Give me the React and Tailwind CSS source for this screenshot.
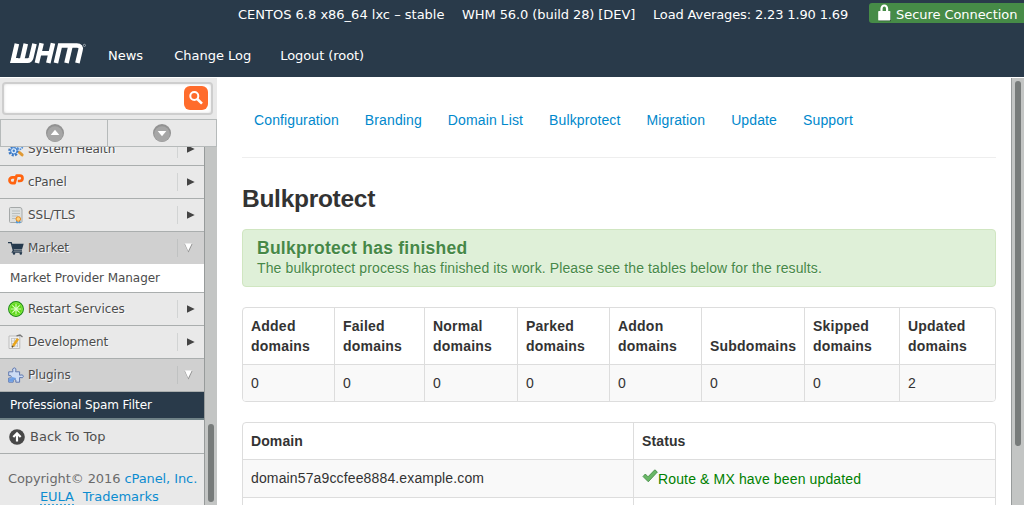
const svgBase = 'shrink-0 block overflow-visible';

function Logo() {
  return (
    <svg className={svgBase} width="78" height="24" viewBox="0 0 78 24" fill="none" stroke="#fff" strokeWidth="4.6" aria-label="WHM">
      <path d="M7.3 .8 L3.4 17.6 H18 Q20.8 17.6 21.6 14.6 L24.9 .8" transform="translate(-.4 0)" />
      <path d="M.4 19.9 L1.6 15 H8 V19.9Z" fill="#fff" stroke="none" />
      <path d="M15.8 .8 L11.9 17.6" />
      <path d="M31.6 .2 L26.9 20 M43 .2 L38.3 20 M29.5 10.2 H41" />
      <path d="M45.9 20 L50 2.5 H66.8 Q71.6 2.5 70.5 7 L67.4 20" />
      <path d="M60.6 2.5 L56.5 20" />
      <circle cx="74.4" cy="2.4" r="1.1" stroke="#9aa4ad" strokeWidth="1" />
    </svg>
  );
}

function Lock() {
  return (
    <svg className={svgBase} width="14" height="18" viewBox="0 0 14 18">
      <path d="M1 8.5H13V17.2H1Z" fill="#25502a" />
      <path d="M3.5 8V4.8a2.8 3.3 0 0 1 5.6 0V8" fill="none" stroke="#fff" strokeWidth="2.2" />
      <rect x="0.2" y="7" width="12.2" height="9.6" rx="0.8" fill="#fff" />
    </svg>
  );
}

function Gear() {
  return (
    <svg className={svgBase} width="16" height="16" viewBox="0 0 16 16">
      <circle cx="5.8" cy="9.8" r="4.3" fill="#bcd8f5" stroke="#3b78c4" strokeWidth="2.6" strokeDasharray="2 1.3" />
      <circle cx="5.8" cy="9.8" r="3.2" fill="#d7e8fa" stroke="#3f7fcc" />
      <circle cx="5.8" cy="9.8" r="1.2" fill="#3f7fcc" />
      <circle cx="12" cy="6" r="2.3" fill="#cfe2f7" stroke="#5a93d6" strokeWidth="1.8" strokeDasharray="1.4 .8" />
      <path d="M11.5 11.5l2.6 2.4" stroke="#e09a35" strokeWidth="3" strokeLinecap="round" />
    </svg>
  );
}

function CpanelIcon() {
  return (
    <svg className={svgBase} width="16" height="16" viewBox="0 0 16 16" fill="none" stroke="#ff6410" strokeWidth="2.7" strokeLinejoin="round">
      <path d="M7 3.4H4.4a2.9 2.9 0 0 0 0 5.8H6.6L8.6 1.6H11.8a2.6 2.6 0 0 1 0 5.4H9.8" />
    </svg>
  );
}

function Certificate() {
  return (
    <svg className={svgBase} width="16" height="16" viewBox="0 0 16 16">
      <path d="M1.5 1.5Q1.5.5 2.5.5H12Q14 .5 14 3V14.5Q14 15.5 13 15.5H2.5Q1.5 15.5 1.5 14.5Z" fill="#dde0e0" stroke="#a5a9a9" />
      <path d="M4 4H12M4 6.5H12M4 9H10M4 11.5H8" stroke="#b9bfbf" />
      <path d="M9 12.5L8.3 15.8H10M11.5 12.5L12.2 15.8H10.5" fill="#4c9be0" stroke="#4c9be0" />
      <circle cx="10.3" cy="12" r="2.3" fill="#ffd27a" stroke="#e98a1c" />
    </svg>
  );
}

function Cart() {
  return (
    <svg className={svgBase} width="16" height="16" viewBox="0 0 16 16">
      <path d="M0 2.7H3.2L5.5 10.8H14" fill="none" stroke="#24394d" strokeWidth="1.3" />
      <path d="M3.8 3.8H15.7L14 9.4H5.3Z" fill="#24394d" />
      <path d="M5.2 10.8L4.3 12.3H14.2" fill="none" stroke="#24394d" strokeWidth="1.1" />
      <circle cx="6" cy="13.5" r="1.2" fill="#24394d" />
      <circle cx="12.8" cy="13.5" r="1.2" fill="#24394d" />
    </svg>
  );
}

function Restart() {
  return (
    <svg className={svgBase} width="16" height="16" viewBox="0 0 16 16">
      <circle cx="8" cy="8" r="7.4" fill="#5bd816" stroke="#1f8a1a" strokeWidth="1.1" />
      <circle cx="8" cy="8" r="6.3" fill="none" stroke="#9af05a" strokeWidth=".8" />
      <path d="M8 2.8V13.2M2.8 8H13.2M4.3 4.3L11.7 11.7M11.7 4.3L4.3 11.7" stroke="#dcffc2" strokeWidth="1.1" />
    </svg>
  );
}

function Develop() {
  return (
    <svg className={svgBase} width="16" height="16" viewBox="0 0 16 16">
      <path d="M1 2H11.8V14.5H1Z" fill="#f0f0f0" stroke="#bdbdbd" />
      <path d="M3 4.5H10M3 7H9M3 9.5H10M3 12H10M3.5 4V13M6.5 4V13M9.5 4V13" stroke="#c2c2c2" strokeWidth=".8" />
      <path d="M8.5 1.8L12 1l2.5 2" fill="none" stroke="#777" strokeWidth="1.3" />
      <path d="M5 12L10 4.8" stroke="#e9a51b" strokeWidth="2.6" />
      <path d="M4 13.4L5.2 11.8" stroke="#5a4520" strokeWidth="1.4" />
    </svg>
  );
}

function Puzzle() {
  return (
    <svg className={svgBase} width="16" height="16" viewBox="0 0 16 16">
      <path d="M.7 4.8H4.9Q3.7 1 6.2.9T7.6 4.8H11.6V8.2Q15.4 7 15.4 9.3T11.6 10.5V15.2H7.8Q8.6 12.3 6.6 12.3T5.2 15.2H.7V11Q3.5 11.6 3.4 9.8T.7 8.6Z" fill="#cddcf4" stroke="#6179ae" />
      <path d="M.8 11.4Q3.8 12 4 10L8 11L7.6 12.4Q5 12 4.8 14.8H.8Z" fill="#6c9fe6" />
    </svg>
  );
}

function Row({ icon, label, open }) {
  return (
    <div className={`flex h-[33px] shrink-0 items-center border-b border-[#aaaeae] pl-2 ${open ? 'bg-[#d0d0d0]' : 'bg-[#e9e9e9]'}`}>
      {icon}
      <span className="ml-1 flex-1 text-[12px] tracking-[-0.05px] text-[#4c4c4c] [text-shadow:1px_1px_1px_#fff]">{label}</span>
      <span className={open ? 'h-[18px] w-px bg-[#c0c2c2]' : 'h-[18px] w-px bg-[#d2d4d4]'} />
      <span className={open ? 'flex w-[26px] justify-center pr-[5px]' : 'flex w-[26px] justify-center pr-[2px] pb-px'}>
        {open ? (
          <svg className={svgBase} width="9" height="10" viewBox="0 0 9 10"><path d="M.5 1H8.5L4.5 9.5Z" fill="#8f8f8f" /><path d="M.8.5H7.8L4.2 8Z" fill="#fff" /></svg>
        ) : (
          <svg className={svgBase} width="9" height="8" viewBox="0 0 9 8"><path d="M1 .3V7.7L8.7 4Z" fill="#444" /></svg>
        )}
      </span>
    </div>
  );
}

function ScrollButton({ down }) {
  return (
    <svg className={svgBase} width="18" height="18" viewBox="0 0 18 18">
      <circle cx="9" cy="9" r="9" fill="#929292" />
      <circle cx="9" cy="10" r="7.8" fill="#a6a6a6" />
      <path d={down ? 'M4.7 7H13.3L9 12.2Z' : 'M4.7 11H13.3L9 5.8Z'} fill="#fff" />
    </svg>
  );
}

function Sidebar() {
  return (
    <aside className="flex w-[217px] shrink-0 flex-col overflow-hidden bg-[#e9e9e9]">
      <div className="h-[41px] shrink-0 pl-[2px] pt-1">
        <div className="flex h-[33px] w-[211px] items-center justify-end rounded-[4px] border-2 border-[#cecece] bg-white pr-[3px] pb-px shadow-[inset_0_0_3px_#ddd]">
          <span className="flex size-6 items-center justify-center rounded-[6px] bg-[#ff6c2c]">
            <svg className={svgBase} width="16" height="16" viewBox="0 0 16 16" fill="none" stroke="#fff">
              <circle cx="6.3" cy="6" r="4" strokeWidth="2" />
              <path d="M9.3 9L14 13.7" strokeWidth="2.6" />
            </svg>
          </span>
        </div>
      </div>
      <div className="flex h-7 shrink-0 border border-[#b6baba]">
        <div className="flex w-[107px] items-center justify-center border-r border-[#b6baba] pl-[2px]"><ScrollButton /></div>
        <div className="flex flex-1 items-center justify-center"><ScrollButton down /></div>
      </div>
      <div className="flex min-h-0 flex-1 overflow-hidden">
        <div className="-mt-[14px] flex w-[205px] shrink-0 flex-col border-r border-[#979b9b]">
          <Row icon={<Gear />} label="System Health" />
          <Row icon={<CpanelIcon />} label="cPanel" />
          <Row icon={<Certificate />} label="SSL/TLS" />
          <div className="flex flex-col [&>div]:h-[32px] [&>div]:border-b-0"><Row icon={<Cart />} label="Market" open /></div>
          <div className="flex h-[29px] shrink-0 items-center border-b border-[#aaaeae] bg-white pl-[10px] text-[12px] tracking-[-0.04px] text-[#4c4c4c]">Market Provider Manager</div>
          <Row icon={<Restart />} label="Restart Services" />
          <Row icon={<Develop />} label="Development" />
          <Row icon={<Puzzle />} label="Plugins" open />
          <div className="flex h-[28px] shrink-0 items-center border-b-2 border-[#6f8287] bg-[#293a4a] pl-[10px] text-[12px] tracking-[-0.08px] text-white">Professional Spam Filter</div>
          <div className="flex h-[34px] shrink-0 items-center border-b border-[#aaaeae] pl-[9px] text-[#505050]">
            <svg className={svgBase} width="16" height="16" viewBox="0 0 16 16"><circle cx="8" cy="8" r="7.8" fill="#484848" /><path d="M8 12.5V5M4.3 8L8 4.3L11.7 8" fill="none" stroke="#fff" strokeWidth="2.2" /></svg>
            <span className="ml-[5px] pt-px text-[13px]">Back To Top</span>
          </div>
          <div className="pt-[16px] pl-2 text-[13px] leading-[18px] tracking-[-0.09px] whitespace-nowrap text-[#6b6b6b]">
            <div>Copyright© 2016 <span className="text-[#0c8cd0]">cPanel, Inc.</span></div>
            <div className="flex gap-[9px] pl-8 text-[#0c8cd0]"><span className="h-[18px] border-b-2 border-dotted border-[#3ba2d9]">EULA</span><span className="tracking-normal">Trademarks</span></div>
          </div>
        </div>
        <div className="flex flex-1 flex-col justify-end bg-[#c3c5c4] pb-[3px] pl-[3px]">
          <div className="h-[78px] w-[6px] rounded-full bg-[#777b7a]" />
        </div>
      </div>
    </aside>
  );
}

const nav = ['Configuration', 'Branding', 'Domain List', 'Bulkprotect', 'Migration', 'Update', 'Support'];
const stats = [
  ['Added', 'domains', 0], ['Failed', 'domains', 0], ['Normal', 'domains', 0], ['Parked', 'domains', 0],
  ['Addon', 'domains', 0], ['', 'Subdomains', 0], ['Skipped', 'domains', 0], ['Updated', 'domains', 2],
];

function Main() {
  return (
    <main className="flex min-w-0 flex-1 bg-white pl-[25px] font-['Liberation_Sans',Arial,sans-serif] text-[14px] leading-5 tracking-[0.12px] text-[#333]">
      <div className="w-[754px] shrink-0">
        <nav className="flex h-[80px] gap-[26px] border-b border-[#eee] pl-3 pt-8 text-[#0088cc]">
          {nav.map((n) => <a key={n}>{n}</a>)}
        </nav>
        <h3 className="mt-[21px] text-[24.5px] leading-10 font-bold tracking-[-0.28px]">Bulkprotect</h3>
        <div className="mt-[10px] h-[58px] rounded-[4px] border border-[#d0e6c1] bg-[#dff0d8] pl-[14px] pt-2 text-[#468847] [text-shadow:0_1px_0_rgba(255,255,255,0.5)]">
          <h4 className="text-[17.5px] leading-5 font-bold tracking-[0.26px]">Bulkprotect has finished</h4>
          <p>The bulkprotect process has finished its work. Please see the tables below for the results.</p>
        </div>
        <div className="mt-5 grid h-[95px] grid-cols-[91px_90px_93px_92px_92px_103px_95px_96px] overflow-hidden rounded-[4px] border border-[#ddd]">
          {stats.map(([a, b, v], i) => (
            <div key={i} className={i ? 'border-l border-[#ddd]' : ''}>
              <div className="flex h-14 flex-col justify-end px-2 pb-2 font-bold tracking-[0.22px]"><span>{a}</span><span>{b}</span></div>
              <div className="h-[37px] border-t border-[#ddd] bg-[#f9f9f9] px-2 pt-2">{v}</div>
            </div>
          ))}
        </div>
        <div className="mt-5 grid h-[200px] grid-cols-[390px_362px] grid-rows-[36px_38px_1fr] rounded-[4px] border border-[#ddd]">
          <div className="px-2 pt-2 font-bold tracking-[0.1px]">Domain</div>
          <div className="border-l border-[#ddd] px-2 pt-2 font-bold">Status</div>
          <div className="border-t border-[#ddd] bg-[#f9f9f9] px-2 pt-2 tracking-[0.14px]">domain57a9ccfee8884.example.com</div>
          <div className="flex border-t border-l border-[#ddd] bg-[#f9f9f9] px-2 pt-[9px] tracking-[0.14px] text-[#008000]">
            <svg className={svgBase} width="16" height="16" viewBox="0 0 16 16"><path d="M1 7.5L3.3 5L6 7.8L12.8 .8L15.4 3L6.3 12.8Z" fill="#69b765" stroke="#3d8540" strokeWidth=".8" /></svg>
            Route &amp; MX have been updated
          </div>
          <div className="border-t border-[#ddd]" />
          <div className="border-t border-l border-[#ddd]" />
        </div>
      </div>
      <div className="ml-[15px] flex-1 border-l border-[#979b9b] bg-[#c3c5c4] pt-[3px] pl-[3px]">
        <div className="h-[365px] w-[6px] rounded-full bg-[#777b7a]" />
      </div>
    </main>
  );
}

export default function App() {
  return (
    <div className="flex h-[505px] w-[1024px] flex-col overflow-hidden bg-white font-['DejaVu_Sans',sans-serif]">
      <header className="flex h-[77px] shrink-0 flex-col bg-[#293a4a] text-[13px] text-white">
        <div className="flex h-[29px] items-center pl-[238px] whitespace-nowrap">
          <span className="w-[224px]">CENTOS 6.8 x86_64 lxc – stable</span>
          <span className="w-[191px] tracking-[-0.08px]">WHM 56.0 (build 28) [DEV]</span>
          <span className="w-[216px] tracking-[-0.14px]">Load Averages: 2.23 1.90 1.69</span>
          <span className="-mt-[3px] flex h-5 flex-1 items-center rounded-l-[3px] bg-[#468b47] pl-[9px]"><Lock /><span className="ml-[4px] pt-[4px] tracking-[-0.06px]">Secure Connection</span></span>
        </div>
        <div className="flex h-[48px] items-start pt-[14px] pl-[10px]">
          <Logo />
          <div className="flex gap-[30px] pt-[3px] pl-5"><span>News</span><span className="pl-px">Change Log</span><span className="-ml-px tracking-[-0.08px]">Logout (root)</span></div>
        </div>
      </header>
      <div className="mt-px flex min-h-0 flex-1">
        <Sidebar />
        <Main />
      </div>
    </div>
  );
}
